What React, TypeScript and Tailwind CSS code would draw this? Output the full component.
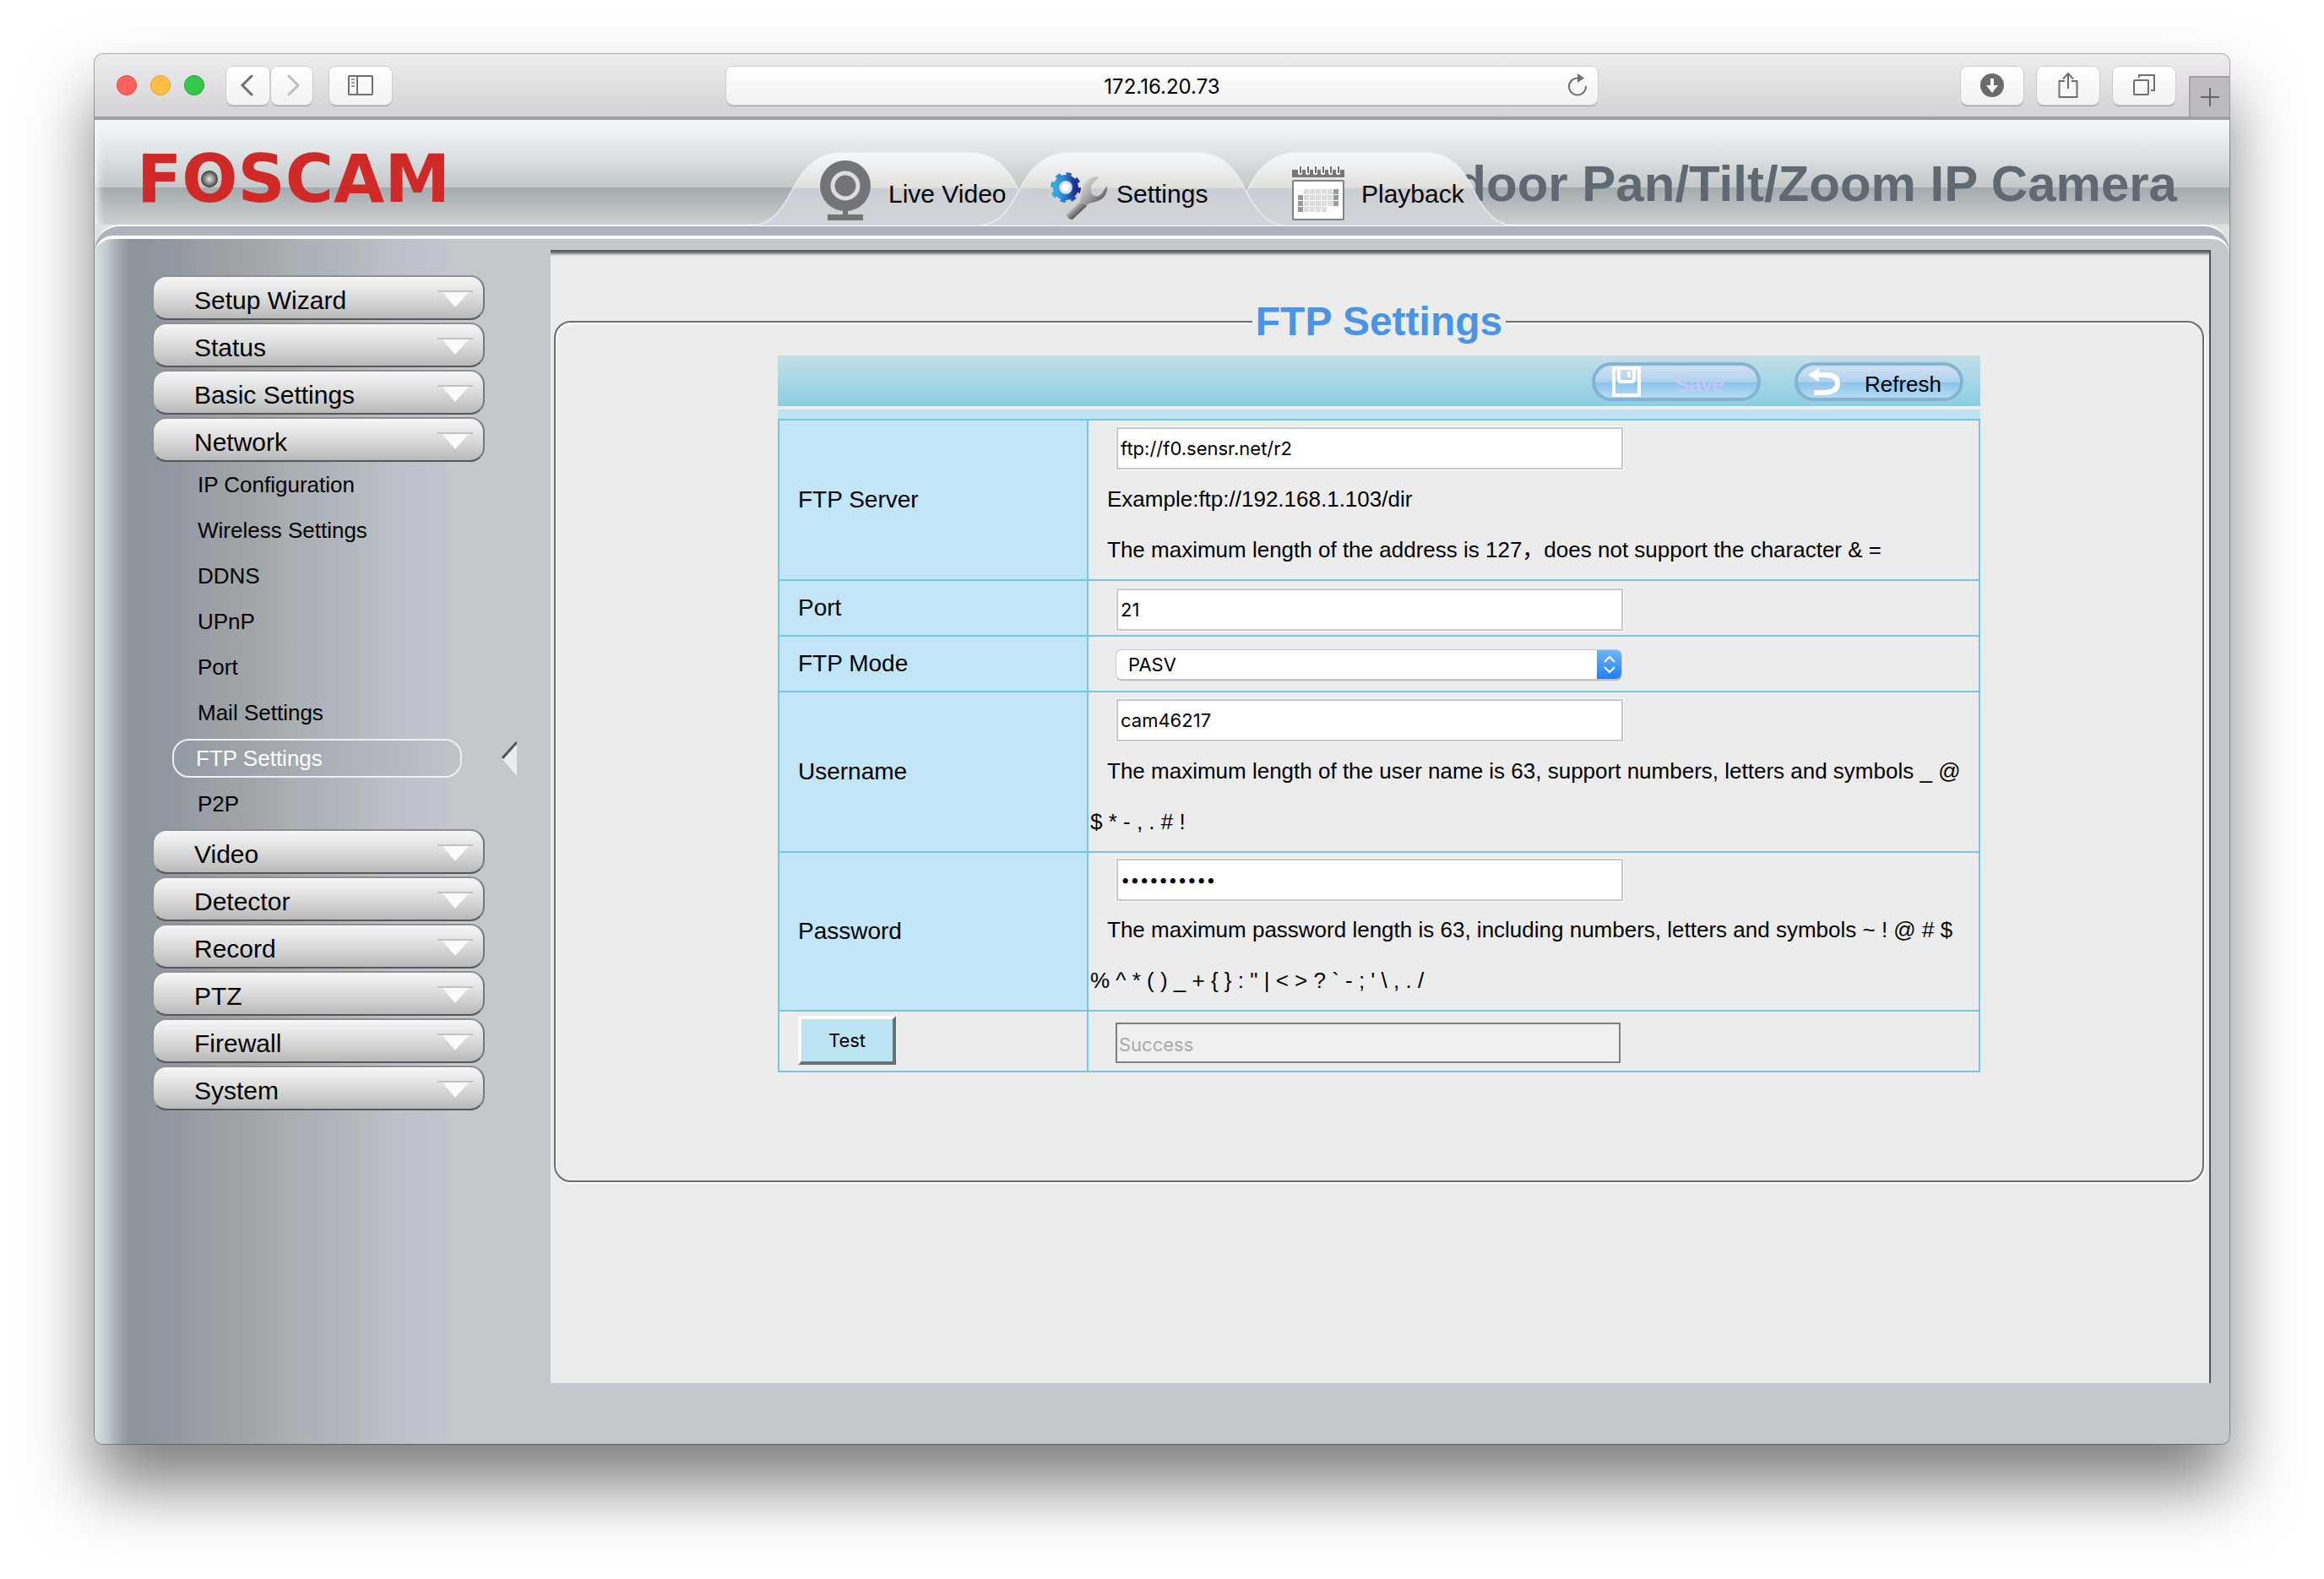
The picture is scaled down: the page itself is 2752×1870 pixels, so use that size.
import { useState } from "react";
import type { ReactNode } from "react";

const subItems = [
  "IP Configuration",
  "Wireless Settings",
  "DDNS",
  "UPnP",
  "Port",
  "Mail Settings",
  "FTP Settings",
  "P2P",
];

function ToolbarButton({ label, className, children }: { label: string; className: string; children: ReactNode }) {
  return (
    <button
      type="button"
      aria-label={label}
      className={`flex h-[45px] items-center justify-center rounded-lg bg-linear-to-b from-white to-[#f2f2f2] shadow-[0_0_0_1px_#cfccd0,0_2px_1px_#a5a2a6] ${className}`}
    >
      {children}
    </button>
  );
}

function BrowserBar() {
  return (
    <div className="grid h-[78px] shrink-0 grid-cols-[1fr_1032px_1fr] border-b-4 border-b-[#a39fa5] bg-linear-to-b from-[#efedf0] to-[#d5d2d6]">
      <div className="flex items-center pl-[26px]">
        <div className="flex gap-4">
          <span className="size-6 rounded-full border border-[#e2453f] bg-[#fc625d]" />
          <span className="size-6 rounded-full border border-[#dd9f34] bg-[#fdbe41]" />
          <span className="size-6 rounded-full border border-[#1fa32e] bg-[#34c84a]" />
        </div>
        <ToolbarButton label="Back" className="ml-[26px] w-[51px] pr-1">
          <svg width="16" height="26" viewBox="0 0 16 26" fill="none" stroke="#6f6f6f" strokeWidth="3">
            <path d="M14 2 3 13l11 11" strokeLinecap="round" />
          </svg>
        </ToolbarButton>
        <ToolbarButton label="Forward" className="ml-0.5 w-[49px] pl-1">
          <svg width="16" height="26" viewBox="0 0 16 26" fill="none" stroke="#bdbdbd" strokeWidth="3">
            <path d="m2 2 11 11L2 24" strokeLinecap="round" />
          </svg>
        </ToolbarButton>
        <ToolbarButton label="Show sidebar" className="ml-5 w-[74px]">
          <svg width="30" height="24" viewBox="0 0 30 24" fill="none" stroke="#6f6f6f" strokeWidth="2">
            <rect x="1" y="1" width="28" height="22" rx="1" />
            <path d="M11 1v22" />
            <path d="M4 5h4M4 9h4M4 13h4" stroke="#9a9a9a" />
          </svg>
        </ToolbarButton>
      </div>
      <div className="flex items-center">
        <div className="flex h-[45px] w-full items-center rounded-lg bg-linear-to-b from-white to-[#f2f2f2] pr-3 shadow-[0_0_0_1px_#cfccd0,0_2px_1px_#a5a2a6]">
          <input
            aria-label="Address"
            defaultValue="172.16.20.73"
            className="min-w-0 flex-1 bg-transparent pt-1 pl-9 text-center font-['Inter',sans-serif] text-[24px] outline-none"
          />
          <button type="button" aria-label="Reload">
            <svg width="24" height="28" viewBox="0 0 24 28" fill="none" stroke="#6f6f6f" strokeWidth="2">
              <path d="M13 5.5A10 10 0 1 0 22 15" />
              <path d="M12 0v11l8-5.500z" fill="#6f6f6f" stroke="none" />
            </svg>
          </button>
        </div>
      </div>
      <div className="flex items-center justify-end">
        <ToolbarButton label="Downloads" className="w-[74px]">
          <svg width="28" height="28" viewBox="0 0 28 28">
            <circle cx="14" cy="14" r="14" fill="#6b6b6b" />
            <path d="M12 6h4v8h5l-7 9-7-9h5z" fill="#fff" />
          </svg>
        </ToolbarButton>
        <ToolbarButton label="Share" className="ml-4 w-[74px]">
          <svg width="24" height="32" viewBox="0 0 24 32" fill="none" stroke="#6f6f6f" strokeWidth="2">
            <path d="M8 11H1.500v19h21V11H16M12 20V3M6 8.500l6-6.500 6 6.500" />
          </svg>
        </ToolbarButton>
        <ToolbarButton label="Show all tabs" className="ml-4 w-[74px]">
          <svg width="26" height="26" viewBox="0 0 26 26" fill="none" stroke="#6f6f6f" strokeWidth="2">
            <rect x="1" y="7" width="17" height="17" rx="1" />
            <path d="M7 4V1h18v18h-4" />
          </svg>
        </ToolbarButton>
        <button
          type="button"
          aria-label="New tab"
          className="ml-4 flex h-12 w-12 items-center justify-center self-end border-t-2 border-l-2 border-[#a39fa5] bg-[#bebbc0]"
        >
          <svg width="22" height="22" viewBox="0 0 22 22" stroke="#666" strokeWidth="2">
            <path d="M11 0v22M0 11h22" />
          </svg>
        </button>
      </div>
    </div>
  );
}

function TabShape({ id }: { id: string }) {
  return (
    <svg className="absolute inset-0 -z-10" width="358" height="88" viewBox="0 0 358 88" aria-hidden="true">
      <defs>
        <linearGradient id={id} x1="0" y1="0" x2="0" y2="1">
          <stop offset="0" stopColor="#f5f9fc" />
          <stop offset="0.480" stopColor="#e2e0dc" />
          <stop offset="0.490" stopColor="#cbced5" />
          <stop offset="1" stopColor="#d3d5d9" />
        </linearGradient>
      </defs>
      <path
        d="M0 87C20 85 32 70 44 47C58 20 74 1 104 1H255C285 1 301 20 314 47C326 70 338 85 358 87Z"
        fill={`url(#${id})`}
      />
      <path
        d="M0 87C20 85 32 70 44 47C58 20 74 1 104 1H255C285 1 301 20 314 47C326 70 338 85 358 87"
        fill="none"
        stroke="#f4f6f8"
        strokeOpacity="0.600"
        strokeWidth="2"
      />
    </svg>
  );
}

function CameraIcon() {
  return (
    <svg className="mt-1" width="62" height="72" viewBox="0 0 62 72" aria-hidden="true">
      <circle cx="31" cy="30" r="30" fill="#737477" />
      <circle cx="31" cy="30" r="15" fill="none" stroke="#dcdde0" strokeWidth="5" />
      <path d="M28 58h6v6h18v7H10v-7h18z" fill="#737477" />
    </svg>
  );
}

function GearIcon() {
  return (
    <svg className="mt-4" width="70" height="60" viewBox="0 0 70 60" aria-hidden="true">
      <defs>
        <linearGradient id="gear" x1="0" y1="0" x2="1" y2="0">
          <stop offset="0" stopColor="#35a8e0" />
          <stop offset="0.500" stopColor="#2c79c4" />
          <stop offset="1" stopColor="#1f2d8c" />
        </linearGradient>
        <radialGradient id="hub">
          <stop offset="0.400" stopColor="#fff" />
          <stop offset="1" stopColor="#b9cdea" />
        </radialGradient>
        <linearGradient id="steel" x1="0" y1="0" x2="1" y2="1">
          <stop offset="0" stopColor="#eeeeee" />
          <stop offset="0.500" stopColor="#a2a2a2" />
          <stop offset="1" stopColor="#3a3736" />
        </linearGradient>
        <linearGradient id="handle" x1="0" y1="0" x2="1" y2="1">
          <stop offset="0.250" stopColor="#f2f2f2" />
          <stop offset="0.500" stopColor="#8b8988" />
          <stop offset="0.800" stopColor="#2f2b2a" />
        </linearGradient>
      </defs>
      <circle cx="20" cy="20" r="11" fill="none" stroke="url(#gear)" strokeWidth="8" />
      <circle cx="20" cy="20" r="16" fill="none" stroke="url(#gear)" strokeWidth="4" strokeDasharray="6.283 6.283" />
      <circle cx="20" cy="20" r="8" fill="url(#hub)" />
      <path d="M39 35 45 42 28 58 Q23 58 20 52Z" fill="url(#handle)" />
      <path
        d="M59 8C50 6 41 12 40 22C39 26 39 32 37 36L44 42C47 38 51 38 55 37C64 35 70 28 69 18L62 28C58 32 51 31 50 25C48 18 54 13 59 8Z"
        fill="url(#steel)"
      />
    </svg>
  );
}

function CalendarIcon() {
  const cells: ReactNode[] = [];
  for (let row = 0; row < 4; row++) {
    for (let col = 0; col < 7; col++) {
      if ((row === 0 && col === 0) || (row === 3 && col > 4)) continue;
      const dark = (col === 0 && row > 0) || (col === 6 && row < 3);
      cells.push(
        <rect key={`${row}-${col}`} x={7 + col * 7} y={29 + row * 7} width="6" height="6" fill={dark ? "#9a9a9a" : "#dcdede"} />,
      );
    }
  }
  return (
    <svg className="mt-2" width="62" height="66" viewBox="0 0 62 66" aria-hidden="true">
      <path d="M0 6h62v9H0z" fill="#77787a" />
      {[7, 16, 25, 34, 43, 52].map((x) => (
        <g key={x}>
          <rect x={x} y="0" width="5" height="12" rx="2" fill="#fff" />
          <path d={`M${x + 3} 2v8`} stroke="#6e6e6e" strokeWidth="2" />
        </g>
      ))}
      <rect x="1" y="19" width="60" height="46" rx="1" fill="#fff" stroke="#808183" strokeWidth="2" />
      {cells}
    </svg>
  );
}

function NavTab({ id, label, icon, className }: { id: string; label: string; icon: ReactNode; className: string }) {
  return (
    <a href={`#${id}`} className={`relative isolate flex h-[88px] w-[358px] items-center text-[30px] leading-9 text-black ${className}`}>
      <TabShape id={`tab-${id}`} />
      {icon}
      <span className="whitespace-nowrap pt-3">{label}</span>
    </a>
  );
}

function SiteHeader() {
  return (
    <header className="flex h-[124px] shrink-0 bg-[linear-gradient(to_bottom,#f3f8fd_0px,#e2e6e9_34px,#c4c8c8_80px,#a3abae_80px,#cdd0d0_124px)] shadow-[inset_12px_0_10px_-8px_#f4f6f6]">
      <div className="w-[781px] shrink-0 pt-[28px] pl-[50px]">
        <span className="relative block w-fit font-['DejaVu_Sans',sans-serif] text-[78px] leading-[84px] font-bold text-[#cf2a27]">
          FOSCAM
          <span className="absolute top-[32px] left-[76px] size-5 rounded-full bg-[radial-gradient(circle,#e6e6e6_0%,#8a8a8a_40%,#3d3d3d_70%)]" />
        </span>
      </div>
      <nav aria-label="Main" className="relative z-10 -mb-0.5 flex shrink-0 items-end">
        <NavTab id="live" label="Live Video" icon={<CameraIcon />} className="gap-5 pl-[77px]" />
        <NavTab id="settings" label="Settings" icon={<GearIcon />} className="z-10 -ml-[89px] gap-2.5 pl-20" />
        <NavTab id="playback" label="Playback" icon={<CalendarIcon />} className="-ml-[88px] gap-5 pl-[98px]" />
      </nav>
      <div className="flex min-w-0 flex-1 justify-end pt-[42px] pr-[62px]">
        <h1 className="text-[60px] leading-[68px] font-bold whitespace-nowrap text-[#5e6971]">
          Indoor Pan/Tilt/Zoom IP Camera
        </h1>
      </div>
    </header>
  );
}

function MenuButton({ label, expanded = false }: { label: string; expanded?: boolean }) {
  return (
    <button
      type="button"
      aria-expanded={expanded}
      className="mb-[3px] flex h-[53px] w-full items-center justify-between rounded-[17px] border-2 border-t-[#8f9093] border-r-[#77787b] border-b-[#57585c] border-l-[#8f9093] bg-linear-to-b from-[#f6f6f6] via-[#dcdcdc] to-[#b8b8b8] pr-2.5 pl-12 text-[30px] leading-9 text-black"
    >
      <span className="pt-1.5">{label}</span>
      <svg width="46" height="24" viewBox="0 0 46 24" aria-hidden="true">
        <path d="M2 4h42" stroke="#c2c2c2" strokeWidth="2" />
        <path d="M8 5h31L23 23z" fill="#fbfbfb" />
      </svg>
    </button>
  );
}

function Sidebar() {
  return (
    <nav aria-label="Settings" className="w-[540px] shrink-0 pt-[43px] pl-[68px]">
      <div className="w-[394px]">
        <MenuButton label="Setup Wizard" />
        <MenuButton label="Status" />
        <MenuButton label="Basic Settings" />
        <MenuButton label="Network" expanded />
      </div>
      <ul className="-mt-[3px] mb-[3px]">
        {subItems.map((item) =>
          item === "FTP Settings" ? (
            <li key={item} className="flex h-[54px] items-center pl-6">
              <a
                href="#ftp-settings"
                aria-current="page"
                className="flex h-[46px] w-[343px] items-center rounded-[20px] border-2 border-[#eef0f2] bg-linear-to-r from-[#949aa3] to-[#c0c3c8] pl-[26px] text-[26px] text-white"
              >
                {item}
              </a>
              <svg className="ml-[47px]" width="18" height="42" viewBox="0 0 18 42" aria-hidden="true">
                <path d="M18 2v40L0 21z" fill="#ececec" />
                <path d="M18 2 1 21" stroke="#55565a" strokeWidth="3" />
              </svg>
            </li>
          ) : (
            <li key={item} className="flex h-[54px] items-center pl-[54px]">
              <a href={`#${item}`} className="text-[26px] leading-8 text-black">
                {item}
              </a>
            </li>
          ),
        )}
      </ul>
      <div className="w-[394px]">
        {["Video", "Detector", "Record", "PTZ", "Firewall", "System"].map((label) => (
          <MenuButton key={label} label={label} />
        ))}
      </div>
    </nav>
  );
}

function PillButton({ label, icon, className, disabled }: { label: string; icon: ReactNode; className: string; disabled?: boolean }) {
  return (
    <button
      type="button"
      disabled={disabled}
      className={`flex h-[46px] w-[200px] items-center justify-between rounded-full border-4 border-[#85b3d6] bg-[linear-gradient(to_bottom,#cfe1f3_0%,#b0d3ef_50%,#8cc4ec_53%,#b4dbf5_100%)] text-[26px] leading-8 ${className}`}
    >
      {icon}
      <span className="pt-1.5">{label}</span>
    </button>
  );
}

function Row({ id, label, children }: { id: string; label: string; children: ReactNode }) {
  return (
    <tr className="h-[66px]">
      <th scope="row" className="border-2 border-[#72c7e4] bg-[#c2e5f8] pl-[22px] text-left align-middle text-[28px] font-normal">
        <label htmlFor={id}>{label}</label>
      </th>
      <td className="border-2 border-[#72c7e4] pt-[3px] pr-2 pb-[5px] pl-0.5 align-middle text-[26px] leading-[60px]">{children}</td>
    </tr>
  );
}

const fieldClass =
  "h-[50px] w-[600px] border-2 border-[#c8c8c8] bg-white px-[3px] font-['Inter',sans-serif] text-[22px] text-black shadow-[0_0_0_1px_#fff]";

function FtpForm() {
  const [server, setServer] = useState("ftp://f0.sensr.net/r2");
  const [port, setPort] = useState("21");
  const [mode, setMode] = useState("PASV");
  const [user, setUser] = useState("cam46217");
  const [password, setPassword] = useState("0123456789");

  return (
    <form className="mx-auto w-[1424px] max-w-full pt-3 pb-32" onSubmit={(e) => e.preventDefault()}>
      <div className="flex h-[60px] items-center justify-end gap-10 bg-linear-to-b from-[#c3dfe6] via-[#a6d7e7] to-[#8dcde3] pt-0.5 pr-5">
        <PillButton
          label="Save"
          disabled
          className="pr-[39px] pl-5 text-[#cfc6fb]"
          icon={
            <svg width="34" height="36" viewBox="0 0 34 36" fill="none" stroke="#fff" aria-hidden="true">
              <rect x="2" y="2" width="30" height="32" strokeWidth="4" />
              <path d="M8 2v13q0 3 3 3h12q3 0 3-3V2" strokeWidth="4" />
              <path d="M20 6v7" strokeWidth="4" />
            </svg>
          }
        />
        <PillButton
          label="Refresh"
          className="pr-[22px] pl-3 text-black"
          icon={
            <svg width="40" height="32" viewBox="0 0 40 32" fill="none" aria-hidden="true">
              <path d="M8 8h12q15 0 15 10t-15 11H7" stroke="#fff" strokeWidth="6" />
              <path d="M0 8 13 0v16z" fill="#fff" />
            </svg>
          }
        />
      </div>
      <div className="mt-1 h-[11px] bg-[#bce5f3]" />
      <table className="w-full table-fixed border-collapse border-2 border-[#72c7e4]">
        <colgroup>
          <col className="w-[366px]" />
          <col />
        </colgroup>
        <tbody>
          <Row id="server" label="FTP Server">
            <div className="flex h-[60px] items-center pl-[31px]">
              <input id="server" value={server} onChange={(e) => setServer(e.target.value)} className={fieldClass} />
            </div>
            <p className="indent-5">Example:ftp://192.168.1.103/dir</p>
            <p className="indent-5">The maximum length of the address is 127，does not support the character &amp; =</p>
          </Row>
          <Row id="port" label="Port">
            <div className="flex h-[56px] items-end pl-[31px]">
              <input id="port" value={port} onChange={(e) => setPort(e.target.value)} className={fieldClass} />
            </div>
          </Row>
          <Row id="mode" label="FTP Mode">
            <div className="flex h-[56px] items-center pt-1 pl-[31px]">
              <div className="relative flex">
                <select
                  id="mode"
                  value={mode}
                  onChange={(e) => setMode(e.target.value)}
                  className="h-[34px] w-[598px] appearance-none rounded-md bg-white pl-3.5 font-['Inter',sans-serif] text-[22px] leading-8 shadow-[0_0_0_1px_#c9c9c9,0_2px_1px_#b0b0b0]"
                >
                  <option>PASV</option>
                  <option>PORT</option>
                </select>
                <span className="pointer-events-none absolute top-0 right-0 flex h-[34px] w-[29px] items-center justify-center rounded-r-md bg-linear-to-b from-[#6db3fa] to-[#1780fb]">
                  <svg width="14" height="22" viewBox="0 0 14 22" fill="none" stroke="#fff" strokeWidth="2" aria-hidden="true">
                    <path d="m1 8 6-6 6 6M1 14l6 6 6-6" />
                  </svg>
                </span>
              </div>
            </div>
          </Row>
          <Row id="username" label="Username">
            <div className="flex h-[60px] items-center pl-[31px]">
              <input id="username" value={user} onChange={(e) => setUser(e.target.value)} className={fieldClass} />
            </div>
            <p className="indent-5">
              The maximum length of the user name is 63, support numbers, letters and symbols _ @ $ * - , . # !
            </p>
          </Row>
          <Row id="password" label="Password">
            <div className="flex h-[58px] items-center pl-[31px]">
              <input
                id="password"
                type="password"
                value={password}
                onChange={(e) => setPassword(e.target.value)}
                className="h-[50px] w-[600px] border-2 border-[#c8c8c8] bg-white px-[3px] font-['Inter',sans-serif] text-[20px] text-black shadow-[0_0_0_1px_#fff]"
              />
            </div>
            <p className="indent-5">
              {"The maximum password length is 63, including numbers, letters and symbols ~ ! @ # $ % ^ * ( ) _ + { } : \" | < > ? ` - ; ' \\ , . /"}
            </p>
          </Row>
          <tr className="h-[72px]">
            <td className="border-2 border-[#72c7e4] pb-0.5 pl-[22px] align-middle">
              <button
                type="button"
                className="block h-[58px] w-[116px] border-4 border-t-white border-r-[#6b7070] border-b-[#6b7070] border-l-white bg-[#bce5f3] font-['Inter',sans-serif] text-[22px]"
              >
                Test
              </button>
            </td>
            <td className="border-2 border-[#72c7e4] pt-1 pl-8 align-middle">
              <input
                aria-label="Test result"
                readOnly
                value="Success"
                className="block h-12 w-[598px] border-2 border-[#7f7f7f] bg-[#f0f0f0] px-0.5 pt-1 font-['Inter',sans-serif] text-[22px] text-[#a9a9a9]"
              />
            </td>
          </tr>
        </tbody>
      </table>
    </form>
  );
}

export default function App() {
  return (
    <div className="flex min-h-screen flex-col bg-white px-28 pt-16 pb-40 font-['Liberation_Sans','Noto_Sans_CJK_SC',sans-serif] text-black">
      <div className="flex flex-1 flex-col overflow-hidden rounded-[10px] bg-[#dfe2e3] shadow-[0_0_0_1px_rgba(0,0,0,0.3),0_50px_80px_rgba(0,0,0,0.5)]">
        <BrowserBar />
        <SiteHeader />
        <div className="flex flex-1 flex-col rounded-t-[30px] border-t-2 border-white bg-[#aeb2bc] pt-[11px]">
          <div className="flex flex-1 rounded-t-[22px] border-t-4 border-white bg-[linear-gradient(to_right,#d3e0e0_0px,#c8d5d5_10px,#b0b8bf_22px,#8e949b_40px,#8e969e_66px,#9297a0_90px,#9c9fa7_135px,#9da1a3_150px,#a3a7ab_198px,#abb0b3_235px,#aeb3bc_275px,#b5babe_310px,#bdc0c9_353px,#c1c3cf_410px,#c4c7cb_418px,#c4c7cc_560px)]">
            <Sidebar />
            <main className="mt-[13px] mr-[22px] mb-[72px] min-w-0 flex-1 border-r-2 border-[#555658] bg-[#ececec] bg-[linear-gradient(to_bottom,#505355_0px,#6f7274_3px,#d5d5d5_6px,#ececec_8px)] bg-no-repeat">
              <fieldset className="mt-[57px] mr-1.5 ml-1 min-w-0 rounded-[20px] border-2 border-[#6e6e6e] shadow-[2px_2px_0_#fff,inset_2px_2px_0_#fff]">
                <legend className="mx-auto bg-[#ececec] px-1 text-[48px] leading-[56px] font-bold text-[#4a94e6]">
                  FTP Settings
                </legend>
                <FtpForm />
              </fieldset>
            </main>
          </div>
        </div>
      </div>
    </div>
  );
}
